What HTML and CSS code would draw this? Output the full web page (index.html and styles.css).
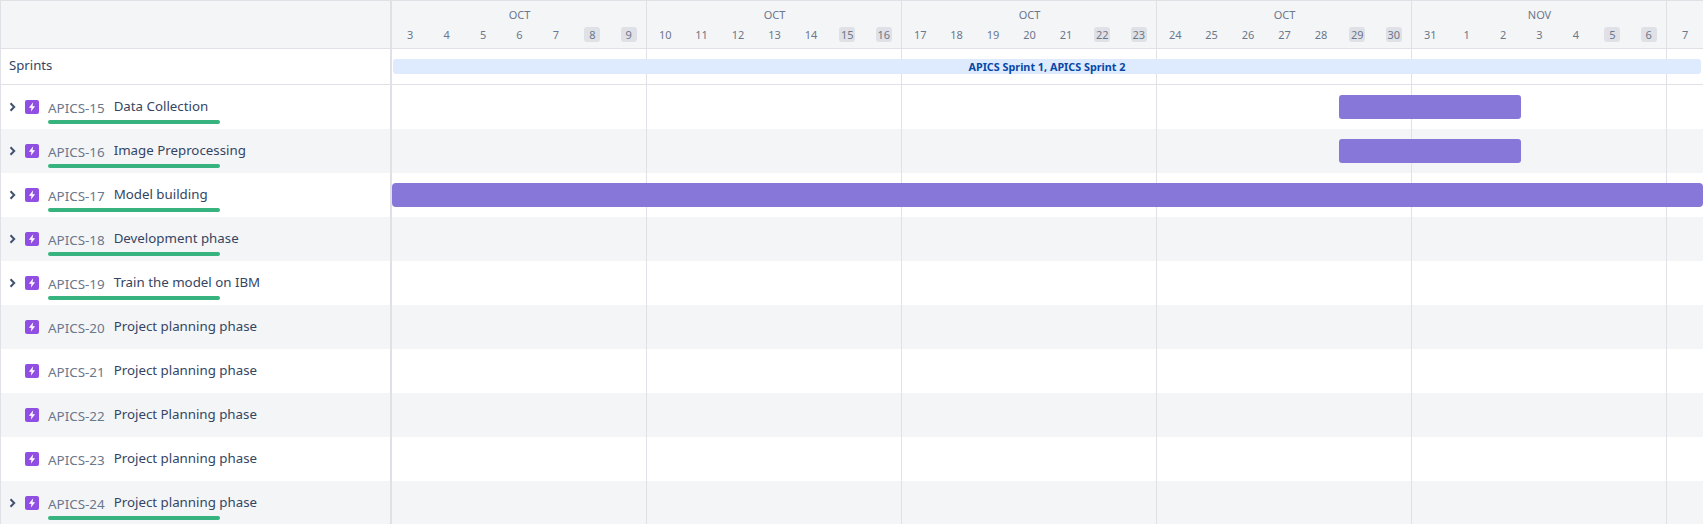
FILE: index.html
```html
<!DOCTYPE html>
<html lang="en">
<head>
    <meta charset="UTF-8">
    <title>Roadmap</title>
    <link rel="stylesheet" href="styles.css">
</head>
<body>
    <svg class="defs" width="0" height="0">
        <symbol id="epic" viewBox="0 0 14 14">
            <rect width="14" height="14" rx="2" fill="#904ee2"/>
            <path d="M8.2 2.2 3.9 7.8h2.6L5.8 11.8 10.1 6.2H7.5z" fill="#fff"/>
        </symbol>
        <symbol id="chevron" viewBox="0 0 7 10">
            <path d="M1.5 1.2 5.2 5 1.5 8.8" fill="none" stroke="#42526e" stroke-width="2"/>
        </symbol>
    </svg>

    <div class="roadmap">
        <div class="row header">
            <div class="side"></div>
            <div class="lane months">
                <div class="week"><div class="month">OCT</div><div class="days"><span>3</span><span>4</span><span>5</span><span>6</span><span>7</span><span class="off">8</span><span class="off">9</span></div></div>
                <div class="week"><div class="month">OCT</div><div class="days"><span>10</span><span>11</span><span>12</span><span>13</span><span>14</span><span class="off">15</span><span class="off">16</span></div></div>
                <div class="week"><div class="month">OCT</div><div class="days"><span>17</span><span>18</span><span>19</span><span>20</span><span>21</span><span class="off">22</span><span class="off">23</span></div></div>
                <div class="week"><div class="month">OCT</div><div class="days"><span>24</span><span>25</span><span>26</span><span>27</span><span>28</span><span class="off">29</span><span class="off">30</span></div></div>
                <div class="week"><div class="month">NOV</div><div class="days"><span>31</span><span>1</span><span>2</span><span>3</span><span>4</span><span class="off">5</span><span class="off">6</span></div></div>
                <div class="week"><div class="month">&nbsp;</div><div class="days"><span>7</span></div></div>
            </div>
        </div>

        <div class="row sprints">
            <div class="side sprints-label">Sprints</div>
            <div class="lane"><div class="sprint-bar">APICS Sprint 1, APICS Sprint 2</div></div>
        </div>

        <div class="row issue">
            <div class="side">
                <svg class="chevron"><use href="#chevron"/></svg>
                <svg class="epic"><use href="#epic"/></svg>
                <div class="info">
                    <div class="title"><span class="key">APICS-15</span><span class="summary">Data Collection</span></div>
                    <div class="progress"></div>
                </div>
            </div>
            <div class="lane"><div class="bar bar-short"></div></div>
        </div>
        <div class="row issue">
            <div class="side">
                <svg class="chevron"><use href="#chevron"/></svg>
                <svg class="epic"><use href="#epic"/></svg>
                <div class="info">
                    <div class="title"><span class="key">APICS-16</span><span class="summary">Image Preprocessing</span></div>
                    <div class="progress"></div>
                </div>
            </div>
            <div class="lane"><div class="bar bar-short"></div></div>
        </div>
        <div class="row issue">
            <div class="side">
                <svg class="chevron"><use href="#chevron"/></svg>
                <svg class="epic"><use href="#epic"/></svg>
                <div class="info">
                    <div class="title"><span class="key">APICS-17</span><span class="summary">Model building</span></div>
                    <div class="progress"></div>
                </div>
            </div>
            <div class="lane"><div class="bar bar-full"></div></div>
        </div>
        <div class="row issue">
            <div class="side">
                <svg class="chevron"><use href="#chevron"/></svg>
                <svg class="epic"><use href="#epic"/></svg>
                <div class="info">
                    <div class="title"><span class="key">APICS-18</span><span class="summary">Development phase</span></div>
                    <div class="progress"></div>
                </div>
            </div>
            <div class="lane"></div>
        </div>
        <div class="row issue">
            <div class="side">
                <svg class="chevron"><use href="#chevron"/></svg>
                <svg class="epic"><use href="#epic"/></svg>
                <div class="info">
                    <div class="title"><span class="key">APICS-19</span><span class="summary">Train the model on IBM</span></div>
                    <div class="progress"></div>
                </div>
            </div>
            <div class="lane"></div>
        </div>
        <div class="row issue">
            <div class="side">
                <span class="no-chevron"></span>
                <svg class="epic"><use href="#epic"/></svg>
                <div class="info">
                    <div class="title"><span class="key">APICS-20</span><span class="summary">Project planning phase</span></div>
                </div>
            </div>
            <div class="lane"></div>
        </div>
        <div class="row issue">
            <div class="side">
                <span class="no-chevron"></span>
                <svg class="epic"><use href="#epic"/></svg>
                <div class="info">
                    <div class="title"><span class="key">APICS-21</span><span class="summary">Project planning phase</span></div>
                </div>
            </div>
            <div class="lane"></div>
        </div>
        <div class="row issue">
            <div class="side">
                <span class="no-chevron"></span>
                <svg class="epic"><use href="#epic"/></svg>
                <div class="info">
                    <div class="title"><span class="key">APICS-22</span><span class="summary">Project Planning phase</span></div>
                </div>
            </div>
            <div class="lane"></div>
        </div>
        <div class="row issue">
            <div class="side">
                <span class="no-chevron"></span>
                <svg class="epic"><use href="#epic"/></svg>
                <div class="info">
                    <div class="title"><span class="key">APICS-23</span><span class="summary">Project planning phase</span></div>
                </div>
            </div>
            <div class="lane"></div>
        </div>
        <div class="row issue">
            <div class="side">
                <svg class="chevron"><use href="#chevron"/></svg>
                <svg class="epic"><use href="#epic"/></svg>
                <div class="info">
                    <div class="title"><span class="key">APICS-24</span><span class="summary">Project planning phase</span></div>
                    <div class="progress"></div>
                </div>
            </div>
            <div class="lane"></div>
        </div>
    </div>
</body>
</html>
```

FILE: styles.css
```css
html, body {
    margin: 0;
    height: 524px;
    overflow: hidden;
}
body {
    font-family: "Noto Sans", "Open Sans", sans-serif;
    font-size: 13.2px;
    color: #172b4d;
    background-color: #ffffff;
}
.defs {
    display: block;
    height: 0;
}
.roadmap {
    border-top: 1px solid #dfe1e6;
    border-left: 1px solid #dfe1e6;
}
.row {
    display: flex;
}
.side {
    box-sizing: border-box;
    flex: 0 0 391px;
    width: 391px;
    border-right: 2px solid #dfe1e6;
    display: flex;
    align-items: flex-start;
}
.lane {
    flex: 1;
    min-width: 0;
    background-image: repeating-linear-gradient(to right, transparent 0, transparent 254px, #dfe1e6 254px, #dfe1e6 255px);
}

/* header */
.header {
    height: 47px;
    border-bottom: 1px solid #dfe1e6;
    background-color: #f4f5f7;
}
.months {
    display: flex;
    overflow: hidden;
}
.week {
    flex: 0 0 255px;
    color: #6b778c;
    font-size: 11px;
}
.month {
    text-align: center;
    line-height: 15px;
    padding-top: 6px;
    height: 20px;
}
.days {
    display: grid;
    grid-template-columns: repeat(7, 1fr);
    justify-items: center;
}
.days span {
    box-sizing: border-box;
    width: 16px;
    height: 15px;
    line-height: 15px;
    text-align: center;
    border-radius: 3px;
}
.days .off {
    background-color: #dfe1e6;
}

/* sprints */
.sprints {
    height: 35px;
    border-bottom: 1px solid #dfe1e6;
}
.sprints-label {
    padding-left: 8px;
    line-height: 33px;
    color: #344563;
}
.sprint-bar {
    margin: 10px 2px 0 1px;
    height: 15px;
    line-height: 15px;
    border-radius: 3px;
    background-color: #deebff;
    color: #0747a6;
    font-size: 10.8px;
    font-weight: bold;
    text-align: center;
}

/* issues */
.issue {
    height: 44px;
}
.issue:nth-child(even) {
    background-color: #f4f5f7;
}
.issue .side {
    padding-left: 8px;
}
.chevron, .no-chevron {
    flex: 0 0 7px;
    width: 7px;
    height: 10px;
    margin-top: 17px;
}
.epic {
    flex: 0 0 14px;
    width: 14px;
    height: 14px;
    margin: 15px 0 0 9px;
}
.info {
    margin-left: 9px;
    width: 172px;
}
.title {
    display: flex;
    align-items: flex-start;
    white-space: nowrap;
    height: 35px;
    line-height: 42px;
}
.key {
    color: #6b778c;
    font-size: 13.4px;
    margin-right: 9px;
    line-height: 46px;
}
.summary {
    color: #344563;
    font-size: 13.3px;
}
.progress {
    height: 4px;
    border-radius: 2px;
    background-color: #36b37e;
}
.bar {
    height: 24px;
    margin-top: 10px;
    background-color: #8777d9;
    border-radius: 3px;
}
.bar-short {
    margin-left: 947px;
    width: 182px;
}
.bar-full {
    width: 100%;
    border-radius: 4px;
}
```
